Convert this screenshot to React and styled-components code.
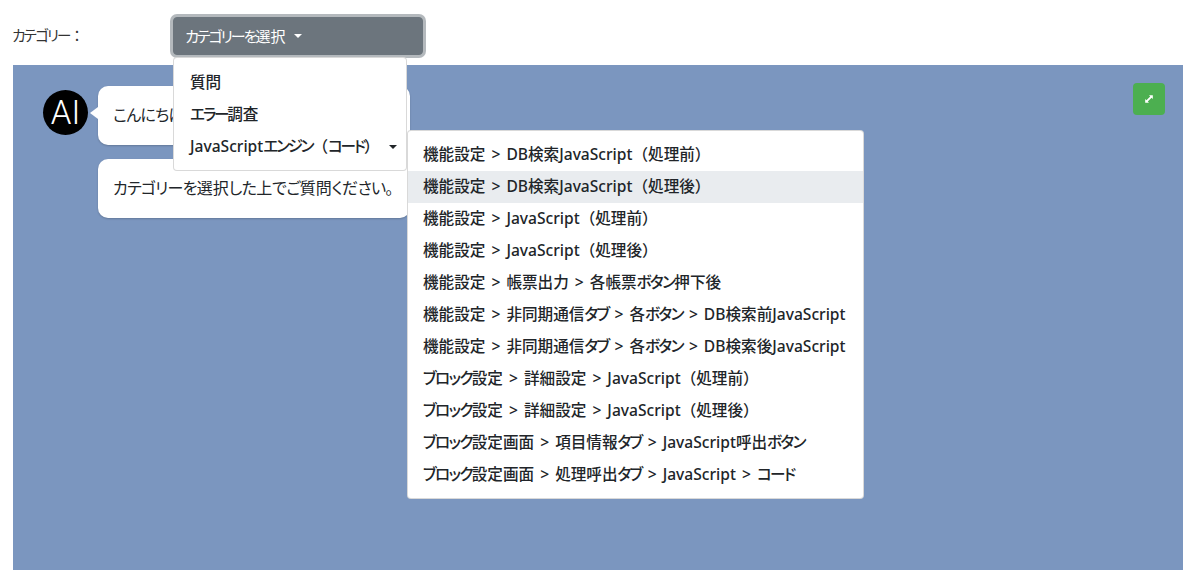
import React from 'react';
import styled, { createGlobalStyle } from 'styled-components';

const GlobalStyle = createGlobalStyle`
  html, body {
    margin: 0;
    padding: 0;
    background: #fff;
  }
  body {
    font-family: "Noto Sans", "Noto Sans CJK JP", sans-serif;
    font-size: 15.6px;
    color: #212529;
  }
`;

const submenuItems = [
  '機能設定 > DB検索JavaScript（処理前）',
  '機能設定 > DB検索JavaScript（処理後）',
  '機能設定 > JavaScript（処理前）',
  '機能設定 > JavaScript（処理後）',
  '機能設定 > 帳票出力 > 各帳票ボタン押下後',
  '機能設定 > 非同期通信タブ > 各ボタン > DB検索前JavaScript',
  '機能設定 > 非同期通信タブ > 各ボタン > DB検索後JavaScript',
  'ブロック設定 > 詳細設定 > JavaScript（処理前）',
  'ブロック設定 > 詳細設定 > JavaScript（処理後）',
  'ブロック設定画面 > 項目情報タブ > JavaScript呼出ボタン',
  'ブロック設定画面 > 処理呼出タブ > JavaScript > コード',
];

// kana runs are set narrower than kanji, like the original UI font
const JpText = ({ children }) =>
  children.split(/([ぁ-んァ-ヶー。]+)/).map((part, i) =>
    i % 2 ? <Kana key={i}>{part}</Kana> : part
  );

export default function App() {
  return (
    <>
      <GlobalStyle />
      <Page>
        <Header>
          <Label><JpText>カテゴリー：</JpText></Label>
          <Dropdown>
            <ToggleButton type="button">
              <JpText>カテゴリーを選択</JpText>
              <Caret />
            </ToggleButton>
            <Menu>
              <MenuItem><JpText>質問</JpText></MenuItem>
              <MenuItem><JpText>エラー調査</JpText></MenuItem>
              <MenuItem>
                <JpText>JavaScriptエンジン（コード）</JpText>
                <DarkCaret />
              </MenuItem>
              <SubMenu>
                {submenuItems.map((item, i) => (
                  <SubMenuItem key={item} $active={i === 1}><JpText>{item}</JpText></SubMenuItem>
                ))}
              </SubMenu>
            </Menu>
          </Dropdown>
        </Header>
        <ChatPanel>
          <ExpandButton type="button" aria-label="expand">
            <svg width="8" height="8" viewBox="0 0 9 9" fill="#fff">
              <path d="M4.500 0.200h4.300V4.500L7.400 3.100 3.100 7.400 4.500 8.800H0.200V4.500L1.600 5.900 5.900 1.600z" />
            </svg>
          </ExpandButton>
          <Avatar>AI</Avatar>
          <Bubbles>
            <Bubble $tail><JpText>こんにちは。AIチャットです。</JpText></Bubble>
            <Bubble><JpText>カテゴリーを選択した上でご質問ください。</JpText></Bubble>
          </Bubbles>
        </ChatPanel>
      </Page>
    </>
  );
}

const Kana = styled.span`
  font-feature-settings: "palt";
  letter-spacing: -1px;
`;

const Page = styled.div`
  display: flex;
  flex-direction: column;
  height: 570px;
  overflow: hidden;
`;

const Header = styled.div`
  display: flex;
  align-items: flex-start;
  height: 65px;
  padding: 17px 0 0 12px;
  box-sizing: border-box;
`;

const Label = styled.div`
  width: 161px;
  font-size: 14.5px;
  line-height: 36px;
  color: #333;

  ${Kana} {
    letter-spacing: -1.7px;
  }
`;

const Dropdown = styled.div`
  position: relative;
  z-index: 2;
`;

const ToggleButton = styled.button`
  display: flex;
  align-items: center;
  width: 250px;
  height: 38px;
  padding: 0 11px 2px;
  border: 1px solid #6c757d;
  border-radius: 4px;
  background: #6c757d;
  box-shadow: 0 0 0 3px rgba(130, 138, 145, 0.6);
  color: #fff;
  font: inherit;
  font-size: 15px;
  white-space: pre;

  ${Kana} {
    letter-spacing: -2px;
  }
`;

const Caret = styled.span`
  width: 0;
  height: 0;
  margin: 2px 0 0 9px;
  border-top: 4.5px solid #fff;
  border-left: 4.5px solid transparent;
  border-right: 4.5px solid transparent;
`;

const DarkCaret = styled(Caret)`
  border-top-color: #212529;
  margin-left: 9px;
`;

const Menu = styled.div`
  position: absolute;
  top: 40px;
  left: 0;
  width: 232px;
  padding: 8px 0;
  background: #fff;
  border: 1px solid rgba(0, 0, 0, 0.15);
  border-radius: 4px;
`;

const MenuItem = styled.div`
  display: flex;
  align-items: center;
  height: 32px;
  padding: 0 16px 1px;
  box-sizing: border-box;
  font-weight: 500;
  white-space: pre;

  ${Kana} {
    letter-spacing: -2.2px;
  }
`;

const SubMenu = styled.div`
  position: absolute;
  top: 72px;
  left: 233px;
  width: 457px;
  padding: 8px 0 7px;
  box-sizing: border-box;
  background: #fff;
  border: 1px solid rgba(0, 0, 0, 0.15);
  border-radius: 4px;
`;

const SubMenuItem = styled.div`
  height: 32px;
  padding: 0 15px;
  line-height: 31px;
  font-weight: 500;
  word-spacing: 2px;
  white-space: pre;
  background: ${props => props.$active ? '#e9ecef' : 'transparent'};

  ${Kana} {
    letter-spacing: -1.6px;
  }
`;

const ChatPanel = styled.div`
  position: relative;
  flex: 1;
  display: flex;
  align-items: flex-start;
  gap: 10px;
  margin: 0 7px 0 13px;
  padding: 21px 0 0 30px;
  background: #7b96bf;
`;

const ExpandButton = styled.button`
  position: absolute;
  top: 18px;
  right: 18px;
  display: flex;
  align-items: center;
  justify-content: center;
  width: 32px;
  height: 32px;
  padding: 0;
  border: none;
  border-radius: 4px;
  background: #4caf50;
`;

const Avatar = styled.div`
  display: flex;
  align-items: center;
  justify-content: center;
  width: 45px;
  height: 45px;
  margin-top: 4px;
  border-radius: 50%;
  background: #000;
  color: #fff;
  font-family: Roboto, sans-serif;
  font-weight: 300;
  font-size: 33px;
`;

const Bubbles = styled.div`
  display: flex;
  flex-direction: column;
  gap: 14px;
  width: 312px;
`;

const Bubble = styled.div`
  position: relative;
  height: 59px;
  padding: 0 15px;
  box-sizing: border-box;
  border-radius: 10px;
  background: #fff;
  box-shadow: 0 1px 2px rgba(0, 0, 0, 0.2);
  font-size: 16px;
  line-height: 59px;
  white-space: nowrap;

  ${Kana} {
    letter-spacing: -0.7px;
  }

  ${props => props.$tail && `
    &::before {
      content: "";
      position: absolute;
      top: 21px;
      left: -8px;
      border-top: 6px solid transparent;
      border-bottom: 6px solid transparent;
      border-right: 8px solid #fff;
    }
  `}
`;
